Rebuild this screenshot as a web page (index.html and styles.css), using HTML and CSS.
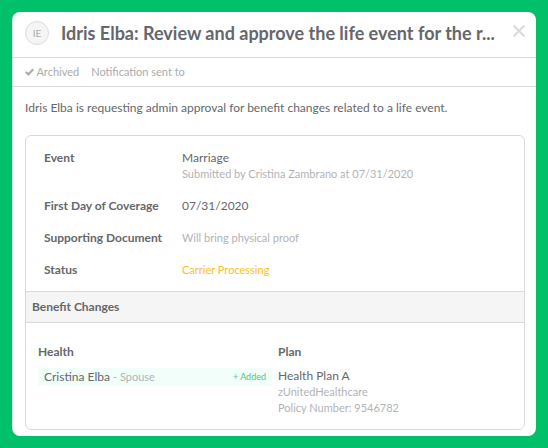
FILE: index.html
```html
<!DOCTYPE html>
<html lang="en">
<head>
  <meta charset="UTF-8" />
  <meta name="viewport" content="width=device-width, initial-scale=1" />
  <title>Life Event Approval</title>
  <link rel="stylesheet" href="styles.css">
</head>
<body>

  <main class="dialog">
    <header class="dialog-header">
      <span class="avatar">IE</span>
      <h1>Idris Elba: Review and approve the life event for the r...</h1>
      <button class="close" type="button" aria-label="Close">
        <svg width="14" height="14" viewBox="0 0 14 14">
          <path d="M1.5 1.5 L12.5 12.5 M12.5 1.5 L1.5 12.5" fill="none" stroke="#d9dadb" stroke-width="2" />
        </svg>
      </button>
    </header>

    <div class="meta">
      <span class="archived">
        <svg width="9" height="8" viewBox="0 0 9 8">
          <path d="M0.8 4 L3.4 6.4 L8.2 1.2" fill="none" stroke="#a9abad" stroke-width="2.2" />
        </svg>
        Archived
      </span>
      <span>Notification sent to</span>
    </div>

    <div class="content">
      <p class="intro">Idris Elba is requesting admin approval for benefit changes related to a life event.</p>

      <section class="panel">
        <dl class="details">
          <dt>Event</dt>
          <dd>Marriage<br><span class="muted">Submitted by Cristina Zambrano at 07/31/2020</span></dd>
          <dt>First Day of Coverage</dt>
          <dd>07/31/2020</dd>
          <dt>Supporting Document</dt>
          <dd class="muted">Will bring physical proof</dd>
          <dt>Status</dt>
          <dd class="processing">Carrier Processing</dd>
        </dl>

        <h2>Benefit Changes</h2>

        <div class="benefits">
          <div>
            <h3>Health</h3>
            <div class="member">
              <span>Cristina Elba <span class="muted">- Spouse</span></span>
              <span class="added">+ Added</span>
            </div>
          </div>
          <div>
            <h3>Plan</h3>
            <p>Health Plan A</p>
            <p class="muted">zUnitedHealthcare</p>
            <p class="muted">Policy Number: 9546782</p>
          </div>
        </div>
      </section>
    </div>
  </main>

</body>
</html>
```

FILE: styles.css
```css
* {
  box-sizing: border-box;
}
body {
  margin: 0;
  padding: 12px;
  background-color: #00c069;
  font-family: Lato, "Open Sans", sans-serif;
  font-size: 12px;
  line-height: 16px;
  color: #65676c;
}
h1, h2, h3, p, dl, dd {
  margin: 0;
}
.dialog {
  background-color: #fff;
  border-left: 1px solid #dcdddd;
  border-radius: 8px;
}
.dialog-header {
  display: flex;
  align-items: center;
  height: 46px;
  padding: 0 10px 4px 12px;
  border-bottom: 1px solid #d8d9da;
}
.avatar {
  flex: none;
  width: 24px;
  height: 24px;
  margin-right: 12px;
  border: 1px solid #dcdddd;
  border-radius: 50%;
  background-color: #f5f5f5;
  color: #a9abad;
  font-size: 10px;
  line-height: 22px;
  text-align: center;
}
h1 {
  flex: 1;
  min-width: 0;
  overflow: hidden;
  white-space: nowrap;
  font-size: 18px;
  font-weight: 700;
  line-height: 24px;
}
.close {
  display: flex;
  padding: 0 0 3px;
  border: none;
  background: none;
  cursor: pointer;
}
.meta {
  display: flex;
  gap: 12px;
  padding: 6px 12px;
  border-bottom: 1px solid #d8d9da;
  color: #a9abad;
  font-size: 11px;
}
.content {
  padding: 13px 11px 6px 12px;
}
.intro {
  margin-bottom: 19px;
}
.panel {
  border: 1px solid #d8d9da;
  border-radius: 6px;
}
.details {
  display: grid;
  grid-template-columns: 122px 1fr;
  gap: 16px;
  padding: 14px 18px 13px;
}
dt {
  font-weight: 700;
}
.muted {
  color: #b1b3b5;
  font-size: 11px;
}
.processing {
  color: #fcbe26;
  font-size: 11px;
}
h2 {
  padding: 7px 6px;
  border: solid #d8d9da;
  border-width: 1px 0;
  background-color: #f5f5f5;
  font-size: 12px;
  line-height: 16px;
}
.benefits {
  display: grid;
  grid-template-columns: 1fr 1fr;
  gap: 6px;
  padding: 21px 12px 13px;
}
h3 {
  margin-bottom: 8px;
  font-size: 12px;
  line-height: 16px;
}
.member {
  display: flex;
  justify-content: space-between;
  padding: 1px 6px;
  background-color: #f1fefa;
}
.added {
  color: #4fc878;
  font-size: 9px;
}
```
